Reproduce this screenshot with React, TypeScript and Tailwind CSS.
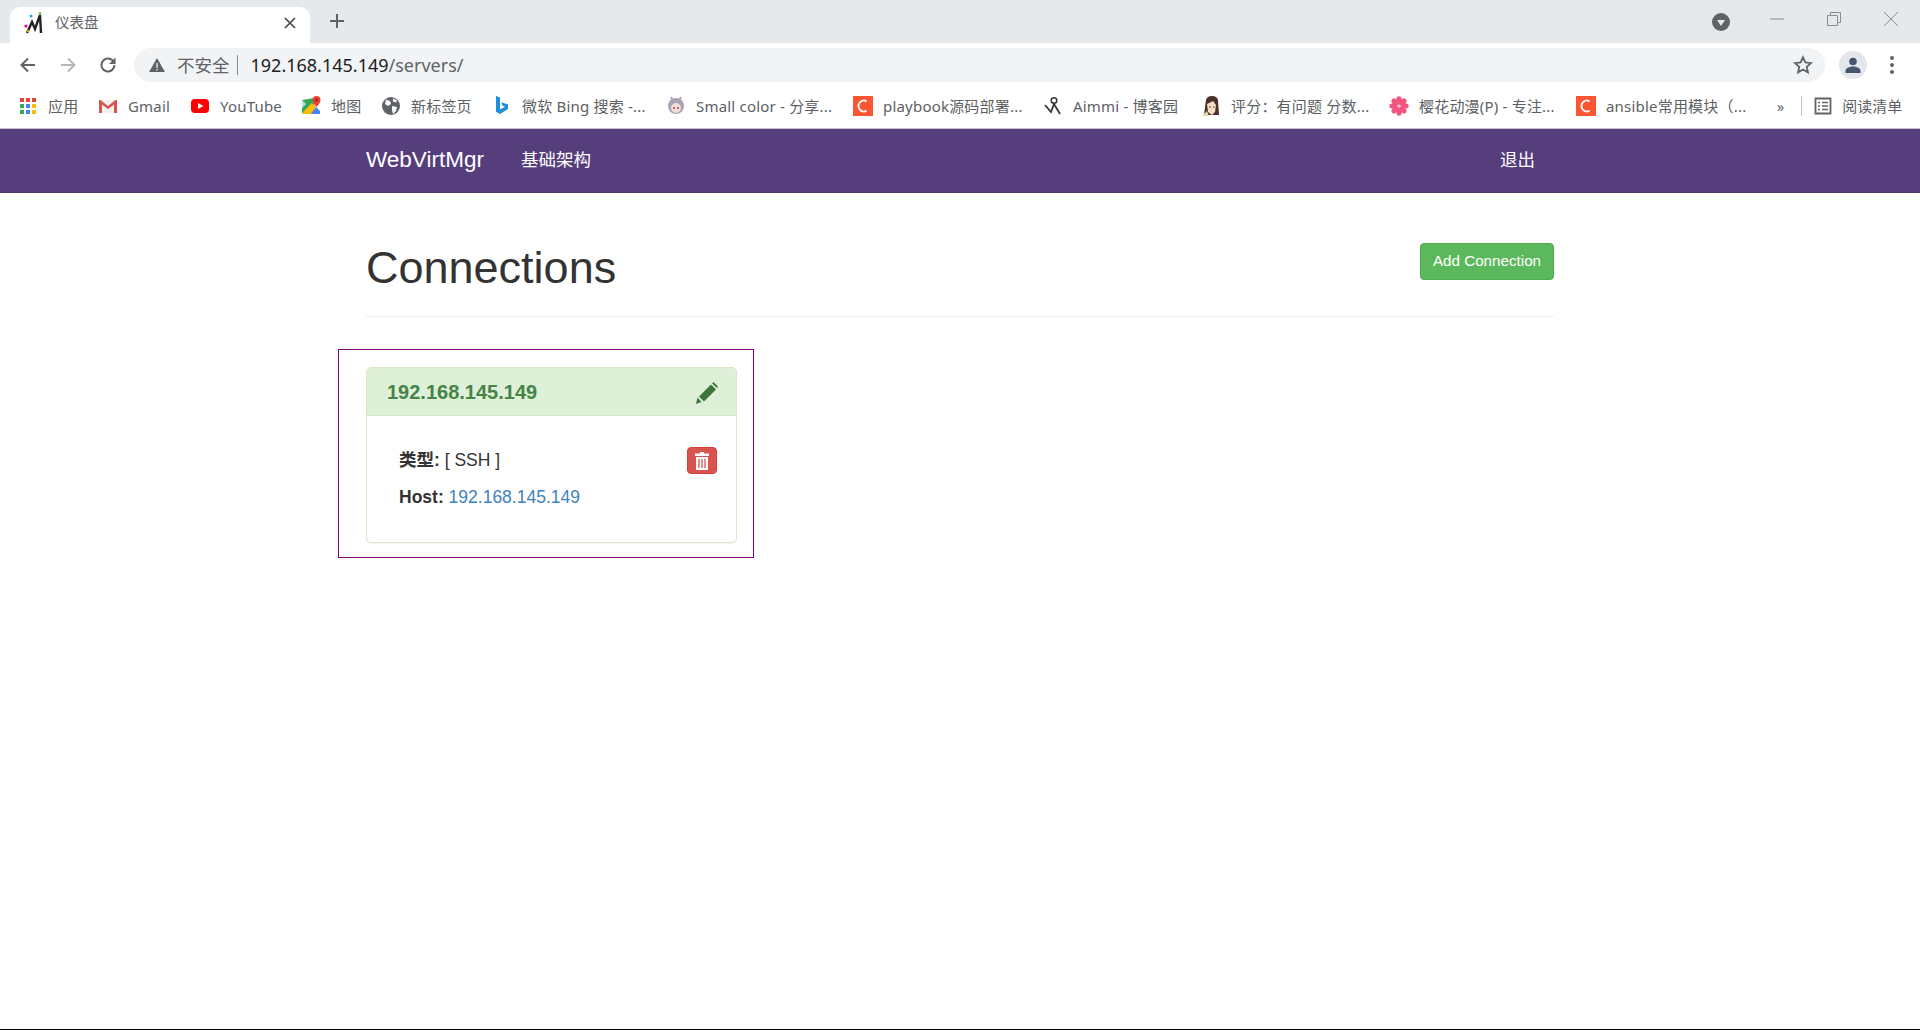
import React from "react";

const ui = "font-['Noto_Sans','Noto_Sans_CJK_SC',sans-serif]";
const web = "font-['Liberation_Sans','Noto_Sans_CJK_SC',sans-serif]";

function CFav() {
  return (
    <svg width="20" height="20" viewBox="0 0 20 20" className="shrink-0">
      <rect width="20" height="20" fill="#fc5531" />
      <path d="M13.5 5.5A5 5.5 0 1 0 13.5 14.5" stroke="#fff" strokeWidth="1.8" fill="none" />
    </svg>
  );
}

function Apps() {
  const c = ["#ea4335", "#ea4335", "#ea4335", "#34a853", "#4285f4", "#fbbc05", "#34a853", "#4285f4", "#fbbc05"];
  return (
    <svg width="20" height="20" viewBox="0 0 20 20" className="shrink-0">
      {c.map((f, i) => (
        <rect key={i} x={2 + (i % 3) * 6} y={2 + Math.floor(i / 3) * 6} width="4" height="4" fill={f} />
      ))}
    </svg>
  );
}

function GmailIcon() {
  return (
    <svg width="20" height="20" viewBox="0 0 20 20" className="shrink-0">
      <path d="M1 4h18v13H1z" fill="#f1f1f1" />
      <path d="M1 4l9 7 9-7v2l-9 7-9-7z" fill="#d8d8d8" />
      <path d="M1 17V4h1.5L10 10l7.5-6H19v13h-3V8.5L10 13 4 8.5V17z" fill="#d9544d" />
    </svg>
  );
}

function YouTubeIcon() {
  return (
    <svg width="20" height="20" viewBox="0 0 20 20" className="shrink-0">
      <rect x="1" y="3" width="18" height="14" rx="4" fill="#f00" />
      <path d="M8 7l5.5 3L8 13z" fill="#fff" />
    </svg>
  );
}

function MapsIcon() {
  return (
    <svg width="20" height="20" viewBox="0 0 20 20" className="shrink-0">
      <path d="M1 4l12-2v16H3l-2-1z" fill="#34a853" />
      <path d="M1 17L11 7l4 4-5 7H3z" fill="#fbbc05" />
      <path d="M10 18l5-7 4 4v3z" fill="#4285f4" />
      <path d="M1 4l4 4-4 4z" fill="#bcd9f5" />
      <path d="M15.5 0a4 4 0 0 1 4 4c0 3-4 7-4 7s-4-4-4-7a4 4 0 0 1 4-4z" fill="#ea4335" />
      <circle cx="15.5" cy="4" r="1.4" fill="#8f2a22" />
    </svg>
  );
}

function GlobeIcon() {
  return (
    <svg width="20" height="20" viewBox="0 0 20 20" className="shrink-0">
      <circle cx="10" cy="10" r="9" fill="#5f6368" />
      <path d="M5 3.5l4 1.5 1 3-3 2-3-2zM11 10l5 1-1 4-3 3-1-4zM12 2.5l4 2-1 2-3-1z" fill="#fff" />
    </svg>
  );
}

function BingIcon() {
  return (
    <svg width="20" height="20" viewBox="0 0 20 20" className="shrink-0">
      <path d="M4 0l4 1.5v12l5-2.7-2.400-1.100-1.400-3.500L16 8.500v4.500l-8 5-4-2.200z" fill="#1d8fe0" />
    </svg>
  );
}

function AnimeA() {
  return (
    <svg width="20" height="20" viewBox="0 0 20 20" className="shrink-0">
      <path d="M5 1l2 4M15 1l-2 4" stroke="#b4a0b8" strokeWidth="2" />
      <circle cx="10" cy="10" r="8" fill="#a8a2b6" />
      <circle cx="10" cy="12" r="5" fill="#f4dcd8" />
      <circle cx="8" cy="12" r="1" fill="#a04050" />
      <circle cx="12" cy="12" r="1" fill="#a04050" />
    </svg>
  );
}

function AimmiIcon() {
  return (
    <svg width="20" height="20" viewBox="0 0 20 20" className="shrink-0">
      <circle cx="11" cy="4.500" r="2.800" stroke="#333" strokeWidth="1.500" fill="none" />
      <path d="M2 9l6 7 3-8 6 10" stroke="#333" strokeWidth="1.700" fill="none" />
    </svg>
  );
}

function AnimeB() {
  return (
    <svg width="20" height="20" viewBox="0 0 20 20" className="shrink-0">
      <path d="M3 19L5 4q1-4 6-4 5 0 6 4l1 15z" fill="#4a3028" />
      <path d="M6 8l6-3 3 4-1 7-3 3-4-3z" fill="#f6dcc6" />
      <path d="M8 11h2M12 11h1.500" stroke="#5a3a30" strokeWidth="1" />
      <path d="M1 20l5-5 2 5z" fill="#e8d8a8" />
    </svg>
  );
}

function FlowerIcon() {
  return (
    <svg width="20" height="20" viewBox="0 0 20 20" className="shrink-0">
      {[0, 1, 2, 3, 4, 5, 6, 7].map((i) => (
        <ellipse key={i} cx="10" cy="4.500" rx="2.800" ry="4.200" fill="#f2557f" transform={`rotate(${i * 45} 10 10)`} />
      ))}
      <circle cx="10" cy="10" r="1.600" fill="#ffc2d0" />
    </svg>
  );
}

function Mark({ icon, text, w, ml }: { icon: React.ReactNode; text: string; w: string; ml: string }) {
  return (
    <div className={`flex items-center gap-[10px] shrink-0 ${ml}`}>
      {icon}
      <span className={`whitespace-nowrap overflow-hidden text-[15px] tracking-[0.2px] leading-5 text-[#5c5f63] ${w}`}>{text}</span>
    </div>
  );
}

function Chrome() {
  return (
    <div className={ui}>
      <div className="h-[43px] bg-[#e6e9ec] flex items-end relative">
        <div className="ml-[10px] w-[300px] h-[36px] bg-white rounded-t-[10px] flex items-center pl-[13px] pr-[13px] pb-[4px]">
          <svg width="24" height="24" viewBox="0 0 24 24" className="shrink-0">
            <path d="M4 22l5-11 3 7 5-14 1 18" stroke="#222" strokeWidth="2.400" fill="none" />
            <circle cx="8" cy="5" r="1.500" fill="#29a8e0" />
            <circle cx="17" cy="2.500" r="1.400" fill="#7cc143" />
            <circle cx="3" cy="15" r="1.600" fill="#e6007e" />
            <circle cx="5" cy="20" r="1.200" fill="#f5a200" />
          </svg>
          <span className="ml-[8px] text-[14.5px] text-[#5f6368]">仪表盘</span>
          <svg width="14" height="14" viewBox="0 0 14 14" className="ml-auto">
            <path d="M2 2l10 10M12 2L2 12" stroke="#45484c" strokeWidth="1.700" />
          </svg>
        </div>
        <svg width="16" height="16" viewBox="0 0 16 16" className="ml-[19px] mb-[14px]">
          <path d="M8 1v14M1 8h14" stroke="#5f6368" strokeWidth="2" />
        </svg>
        <div className="ml-auto flex items-center mb-[11px]">
          <svg width="18" height="18" viewBox="0 0 18 18" className="mr-[40px]">
            <circle cx="9" cy="9" r="9" fill="#5f6368" />
            <path d="M5 7h8l-4 6z" fill="#e6e9ec" />
          </svg>
          <svg width="14" height="14" viewBox="0 0 14 14" className="mr-[43px] mb-[6px]">
            <path d="M0 7h14" stroke="#8a8d90" strokeWidth="1" />
          </svg>
          <svg width="14" height="14" viewBox="0 0 14 14" className="mr-[43px] mb-[6px]">
            <path d="M.5 3.500h10v10H.5zM3.500 3.500v-3h10v10h-3" stroke="#8a8d90" strokeWidth="1" fill="none" />
          </svg>
          <svg width="14" height="14" viewBox="0 0 14 14" className="mr-[22px] mb-[6px]">
            <path d="M0 0l14 14M14 0L0 14" stroke="#8a8d90" strokeWidth="1" />
          </svg>
        </div>
      </div>
      <div className="h-[43px] bg-white flex items-center">
        <svg width="18" height="18" viewBox="0 0 18 18" className="ml-[19px]">
          <path d="M16 9H3M9 2.500L2.500 9 9 15.500" stroke="#5f6368" strokeWidth="2" fill="none" />
        </svg>
        <svg width="18" height="18" viewBox="0 0 18 18" className="ml-[22px]">
          <path d="M2 9h13M9 2.500L15.500 9 9 15.500" stroke="#b5b7ba" strokeWidth="2" fill="none" />
        </svg>
        <svg width="18" height="18" viewBox="0 0 18 18" className="ml-[22px]">
          <path d="M15.500 9a6.500 6.500 0 1 1-2-4.700L16 7" stroke="#5f6368" strokeWidth="2" fill="none" />
          <path d="M16.500 1.500V8H10z" fill="#5f6368" />
        </svg>
        <div className="ml-[17px] w-[1691px] h-[34px] rounded-full bg-[#f1f3f4] flex items-center pl-[14px] pr-[12px]">
          <svg width="18" height="18" viewBox="0 0 18 18">
            <path d="M9 2l8 14H1z" fill="#5f6368" />
            <path d="M9 7v5M9 13v1.500" stroke="#f1f3f4" strokeWidth="1.300" />
          </svg>
          <span className="ml-[11px] mt-[1px] text-[17.5px] text-[#5f6368]">不安全</span>
          <span className="ml-[7px] w-px h-[20px] bg-[#8a8d90]" />
          <span className="ml-[13px] mt-[1px] text-[18px] text-[#202124]">
            192.168.145.149<span className="text-[#5f6368]">/servers/</span>
          </span>
          <svg width="20" height="20" viewBox="0 0 24 24" className="ml-auto">
            <path d="M12 2.800l2.800 6.200 6.700.7-5 4.500 1.400 6.600L12 17.400l-5.900 3.400 1.400-6.600-5-4.500 6.700-.7z" stroke="#5f6368" strokeWidth="2.200" fill="none" />
          </svg>
        </div>
        <div className="ml-[14px] w-[28px] h-[28px] rounded-full bg-[#e3e6ea] flex items-center justify-center">
          <svg width="20" height="20" viewBox="0 0 20 20">
            <circle cx="10" cy="6.500" r="3.800" fill="#46556f" />
            <path d="M2.500 18v-2c0-3 4-4.500 7.500-4.500s7.500 1.500 7.500 4.500v2z" fill="#46556f" />
          </svg>
        </div>
        <svg width="6" height="20" viewBox="0 0 6 20" className="ml-[22px]">
          <circle cx="3" cy="3" r="2" fill="#5f6368" />
          <circle cx="3" cy="10" r="2" fill="#5f6368" />
          <circle cx="3" cy="17" r="2" fill="#5f6368" />
        </svg>
      </div>
      <div className="h-[43px] bg-white flex items-center pl-[18px] pb-[2px] border-b border-[#c9c6d2]">
        <Mark icon={<Apps />} text="应用" w="w-[32px]" ml="ml-0" />
        <Mark icon={<GmailIcon />} text="Gmail" w="w-[44px]" ml="ml-[18px]" />
        <Mark icon={<YouTubeIcon />} text="YouTube" w="w-[62px]" ml="ml-[18px]" />
        <Mark icon={<MapsIcon />} text="地图" w="w-[32px]" ml="ml-[19px]" />
        <Mark icon={<GlobeIcon />} text="新标签页" w="w-[62px]" ml="ml-[18px]" />
        <Mark icon={<BingIcon />} text="微软 Bing 搜索 -..." w="w-[125px]" ml="ml-[19px]" />
        <Mark icon={<AnimeA />} text="Small color - 分享..." w="w-[139px]" ml="ml-[19px]" />
        <Mark icon={<CFav />} text="playbook源码部署..." w="w-[140px]" ml="ml-[18px]" />
        <Mark icon={<AimmiIcon />} text="Aimmi - 博客园" w="w-[110px]" ml="ml-[20px]" />
        <Mark icon={<AnimeB />} text="评分：有问题 分数..." w="w-[139px]" ml="ml-[18px]" />
        <Mark icon={<FlowerIcon />} text="樱花动漫(P) - 专注..." w="w-[138px]" ml="ml-[19px]" />
        <Mark icon={<CFav />} text="ansible常用模块（..." w="w-[140px]" ml="ml-[19px]" />
        <span className="ml-[31px] text-[14px] text-[#5f6368]">»</span>
        <span className="ml-[17px] w-px h-[20px] bg-[#c4c6c9]" />
        <svg width="18" height="18" viewBox="0 0 18 18" className="ml-[12px] shrink-0">
          <path d="M1.500 1.500h15v15h-15z" stroke="#5f6368" strokeWidth="1.800" fill="none" />
          <path d="M4 5.500h2M8 5.500h6M4 9h2M8 9h6M4 12.500h2M8 12.500h6" stroke="#5f6368" strokeWidth="1.400" />
        </svg>
        <span className="ml-[10px] whitespace-nowrap text-[15px] text-[#5c5f63]">阅读清单</span>
      </div>
    </div>
  );
}

export default function App() {
  return (
    <div className="h-[1030px] bg-white overflow-hidden flex flex-col border-b border-black">
      <Chrome />
      <nav className={`${web} h-[64px] bg-[#563d7c] border-b border-[#4b3569] shrink-0`}>
        <div className="w-[1188px] mx-auto h-full flex items-center text-white">
          <span className="mb-[2px] text-[22.5px]">WebVirtMgr</span>
          <span className="ml-[37px] text-[17.5px]">基础架构</span>
          <span className="ml-auto mr-[19px] text-[17.5px]">退出</span>
        </div>
      </nav>
      <main className={`${web} w-[1188px] mx-auto text-[#333] text-[17.5px]`}>
        <div className="h-[124px] border-b border-[#eeeeee] flex justify-between">
          <h1 className="mt-[50px] text-[45px] leading-[50px] font-normal text-[#333]">Connections</h1>
          <button className="mt-[50px] w-[134px] h-[37px] pb-[2px] rounded-[4px] bg-[#5cb85c] border border-[#4cae4c] text-white text-[15.2px] leading-none">
            Add Connection
          </button>
        </div>
        <div className="mt-[32px] -ml-[28px] w-[416px] h-[209px] border border-[#800080] pl-[27px] pt-[17px]">
          <div className="w-[371px] h-[176px] rounded-[5px] border border-[#d6e9c6] shadow-[0_1px_1px_rgba(0,0,0,0.05)]">
            <div className="h-[48px] bg-[#dff0d8] border-b border-[#d6e9c6] rounded-t-[4px] flex items-center justify-between pl-[20px] pr-[18px]">
              <span className="text-[20px] font-bold text-[#458446]">192.168.145.149</span>
              <svg width="22" height="22" viewBox="0 0 22 22" className="mt-[3px]">
                <path d="M0 22l1.500-6.500L5.500 20z" fill="#3c763d" />
                <path d="M3 14.500L15 2.500l5 5L8 19.500z" fill="#3c763d" />
                <path d="M16 1.500l1.500-1.500 4.500 4.500-1 1.500z" fill="#3c763d" />
              </svg>
            </div>
            <div className="pl-[32px] pr-[19px] pt-[26px] flex justify-between items-start">
              <div className="leading-[37px]">
                <div>
                  <b>类型:</b> [ SSH ]
                </div>
                <div>
                  <b>Host:</b> <span className="text-[#3f82c0]">192.168.145.149</span>
                </div>
              </div>
              <div className="w-[30px] h-[27px] mt-[5px] rounded-[4px] bg-[#d9534f] border border-[#d43f3a] flex items-center justify-center">
                <svg width="16" height="18" viewBox="0 0 16 18">
                  <path d="M6 0h4v1.500h5V4H1V1.500h5z" fill="#fff" />
                  <path d="M2 5h12v13H2z" fill="#fff" />
                  <path d="M5 7v9M8 7v9M11 7v9" stroke="#d9534f" strokeWidth="1.300" />
                </svg>
              </div>
            </div>
          </div>
        </div>
      </main>
    </div>
  );
}
